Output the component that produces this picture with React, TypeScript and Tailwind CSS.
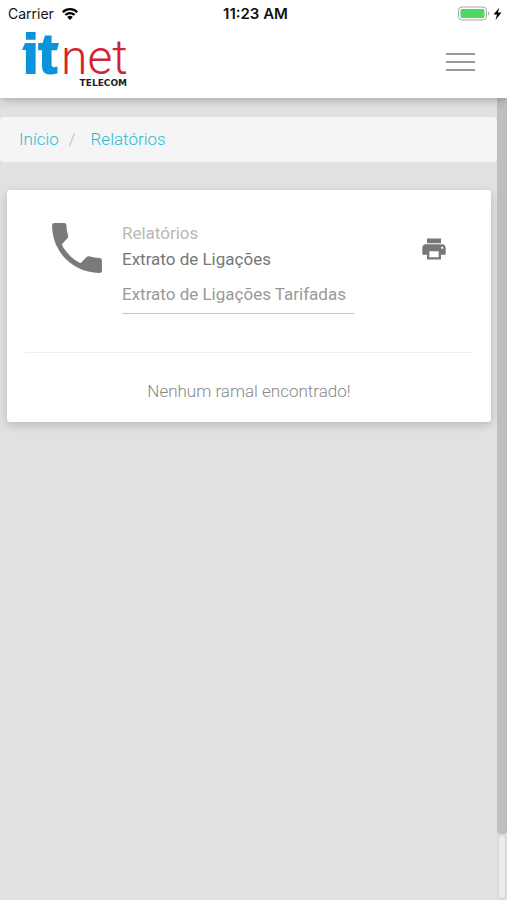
import { MdPrint } from 'react-icons/md';

function StatusBar() {
  return (
    <div className="relative flex h-7 items-center justify-between pl-2 pr-1 font-['Inter',sans-serif] text-sm text-[#111111]">
      <div className="flex items-center gap-2">
        <span>Carrier</span>
        <svg className="h-3 w-4" viewBox="0 0 16 12" fill="none" stroke="#000" strokeWidth="2.2">
          <path d="M0.8 4.2a10.2 10.2 0 0 1 14.4 0" />
          <path d="M3.4 7a6.5 6.5 0 0 1 9.2 0" />
          <path d="M8 12L5.2 9a4 4 0 0 1 5.6 0z" fill="#000" stroke="none" />
        </svg>
      </div>
      <span className="absolute inset-x-0 pl-1 text-center text-[15px] font-semibold">11:23 AM</span>
      <svg className="h-4 w-[46px]" viewBox="0 0 46 16">
        <rect x="1.5" y="1" width="28" height="13" rx="3.5" fill="#fff" stroke="#a8a8a8" />
        <rect x="3.5" y="3" width="24" height="9" rx="1.5" fill="#4cd964" />
        <path d="M31 5.5v4c1.6-.6 1.6-3.4 0-4z" fill="#a8a8a8" />
        <path d="M42.5 1.500L36.500 8.500h3.500l-1.500 5.500 6-7.500h-3.700z" fill="#000" />
      </svg>
    </div>
  );
}

function Logo() {
  return (
    <a href="#inicio" aria-label="itnet telecom" className="block">
      <svg className="h-[58px] w-[108px] overflow-visible" viewBox="0 0 108 58">
        <text x="2" y="43" fill="#0b93dc" stroke="#0b93dc" strokeWidth="2" fontFamily="Liberation Sans, sans-serif" fontWeight="700" fontSize="56">it</text>
        <path d="M1 20L4 13h4v7zM33 13h5l-2 7h-3z" fill="#0b93dc" />
        <text x="40" y="44" fill="#d2232f" fontFamily="Roboto, sans-serif" fontWeight="300" fontSize="48">net</text>
        <text x="106" y="56" textAnchor="end" fill="#222" fontFamily="DejaVu Sans, sans-serif" fontWeight="700" fontSize="9">TELECOM</text>
      </svg>
    </a>
  );
}

function PhoneIcon({ className }: { className: string }) {
  return (
    <svg className={className} viewBox="0 0 24 24" fill="currentColor">
      <path d="M6.62 10.79c1.44 2.83 3.76 5.14 6.59 6.59l2.2-2.2c.27-.27.67-.36 1.02-.24 1.12.37 2.33.57 3.57.57.4 0 .8.3.8.8V20c0 .5-.4.8-.8.8C10.61 20.800 3.200 13.390 3.200 4c0-.5.4-.8.8-.8h3.500c.5 0 .8.4.8.8 0 1.250.2 2.450.57 3.570.11.35.03.74-.25 1.020l-2 2.200z" />
    </svg>
  );
}

export default function App() {
  return (
    <div className="flex min-h-screen flex-col bg-[#e1e1e1] font-['Roboto',sans-serif] text-[17px] leading-6">
      <header className="relative z-10 bg-white shadow-[0_1px_10px_rgba(0,0,0,0.3)]">
        <StatusBar />
        <div className="flex h-[70px] items-start justify-between pl-[21px] pr-8 pt-[2px]">
          <Logo />
          <button type="button" aria-label="Menu" className="mt-[23px] flex w-[29px] flex-col gap-[6px]">
            <span className="h-[2px] bg-[#999999]" />
            <span className="h-[2px] bg-[#999999]" />
            <span className="h-[2px] bg-[#999999]" />
          </button>
        </div>
      </header>

      <div className="flex flex-1">
        <main className="min-w-0 flex-1 pt-[19px]">
          <nav className="flex h-[45px] items-center rounded bg-[#f5f5f5] px-[19px] pb-[2px] font-light text-[#26bcd4]">
            <a href="#inicio">Início</a>
            <span className="pl-[10px] pr-[15px] text-[#b8b8b8]">/</span>
            <a href="#relatorios">Relatórios</a>
          </nav>

          <section className="ml-[7px] mr-[6px] mt-7 rounded-[3px] bg-white px-[18px] shadow-[0_3px_10px_rgba(0,0,0,0.18)]">
            <div className="flex h-[163px] items-start border-b border-[#eeeeee] pt-6">
              <PhoneIcon className="ml-[18px] size-[68px] shrink-0 text-[#7a7a7a]" />
              <div className="ml-[11px] w-[232px] pt-[7px]">
                <p className="text-[#b8b8b8]">Relatórios</p>
                <h1 className="mt-[2px] text-[#777777]">Extrato de Ligações</h1>
                <select
                  aria-label="Tipo de extrato"
                  className="mt-[7px] block h-9 w-full appearance-none border-b border-[#c4c4c4] bg-transparent pb-1 text-[#999999]"
                >
                  <option>Extrato de Ligações Tarifadas</option>
                </select>
              </div>
              <button type="button" aria-label="Imprimir" className="ml-auto mr-[25px] mt-[21px] text-[#777777]">
                <MdPrint className="size-7" />
              </button>
            </div>
            <p className="pb-[19px] pt-[26px] text-center font-light text-[#888888]">Nenhum ramal encontrado!</p>
          </section>
        </main>

        {/* scroll rail */}
        <div className="flex w-[10px] flex-col" aria-hidden="true">
          <div className="flex-1 rounded-b-[3px] bg-[#bfbfbf]" />
          <div className="h-[66px] rounded-[5px] border-2 border-[#d8d8d8] bg-[#ebebeb]" />
        </div>
      </div>
    </div>
  );
}
